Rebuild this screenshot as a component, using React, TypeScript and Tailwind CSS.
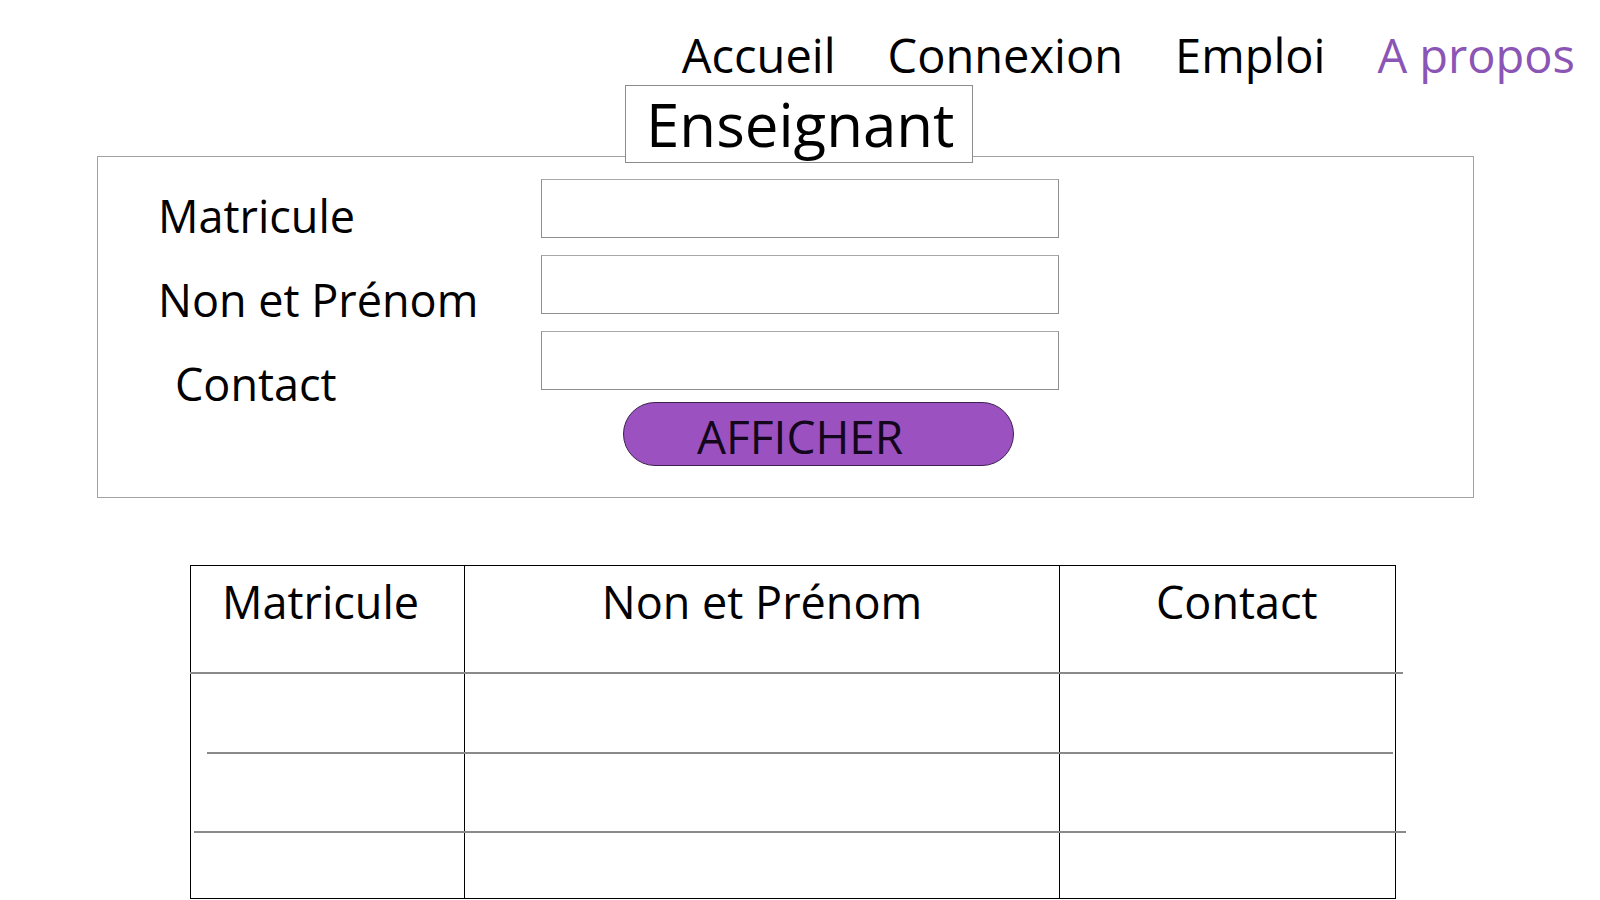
const font = "font-['Open_Sans',sans-serif]";

const navItems = [
  { label: "Accueil", active: false },
  { label: "Connexion", active: false },
  { label: "Emploi", active: false },
  { label: "A propos", active: true },
];

const fields = ["Matricule", "Non et Prénom", "Contact"];

function Separator({ className }: { className: string }) {
  return <div className={`h-[2px] bg-[#8a8a8a] ${className}`} />;
}

function Row({ height, children }: { height: string; children?: React.ReactNode[] }) {
  return (
    <div className={`grid grid-cols-[274px_595px_335px] ${height}`}>
      <div className="border-r border-black">{children?.[0]}</div>
      <div className="border-r border-black">{children?.[1]}</div>
      <div>{children?.[2]}</div>
    </div>
  );
}

export default function App() {
  return (
    <div className={`min-h-screen bg-white text-black ${font}`}>
      <nav className="flex justify-end gap-[52px] pr-[25px] pt-[32px] text-[47px] leading-[47px]">
        {navItems.map((item) => (
          <a key={item.label} href="#" className={item.active ? "text-[#8b55b5]" : "text-black"}>
            {item.label}
          </a>
        ))}
      </nav>

      <div className="relative z-10 ml-[625px] mt-[6px] h-[78px] w-[348px] border border-[#8c8c8c] bg-white pl-[20px] text-[60px] leading-[77px]">
        Enseignant
      </div>

      <form className="-mt-[7px] ml-[97px] flex h-[342px] w-[1377px] border border-[#a3a3a3]">
        <div className="w-[443px] whitespace-nowrap pl-[60px] pt-[17px] text-[45px] leading-[84px]">
          {fields.map((field, i) => (
            <div key={field} className={i === 2 ? "pl-[17px]" : ""}>
              {field}
            </div>
          ))}
        </div>
        <div className="flex flex-col pt-[22px]">
          <div className="flex flex-col gap-[17px]">
            {fields.map((field) => (
              <input
                key={field}
                aria-label={field}
                className="h-[59px] w-[518px] border border-[#8f8f8f] border-t-[#a8a8a8] bg-white outline-none"
              />
            ))}
          </div>
          <button
            type="button"
            className="ml-[82px] mt-[12px] h-[64px] w-[391px] rounded-full border border-[#3d2050] bg-[#9b52c0] pl-[73px] text-left text-[46px] leading-[66px] text-[#14061c]"
          >
            AFFICHER
          </button>
        </div>
      </form>

      <div className="ml-[190px] mt-[67px] w-[1206px] border border-black">
        <Row height="h-[106px]">
          {[
            <div key="a" className="pl-[31px] pt-[13px] text-[45px] leading-[45px]">Matricule</div>,
            <div key="b" className="pt-[13px] text-center text-[45px] leading-[45px]">Non et Prénom</div>,
            <div key="c" className="pl-[96px] pt-[13px] text-[45px] leading-[45px]">Contact</div>,
          ]}
        </Row>
        <Separator className="-ml-[1px] -mr-[8px]" />
        <Row height="h-[78px]" />
        <Separator className="ml-[16px] mr-[2px]" />
        <Row height="h-[77px]" />
        <Separator className="ml-[3px] -mr-[11px]" />
        <Row height="h-[65px]" />
      </div>
    </div>
  );
}
